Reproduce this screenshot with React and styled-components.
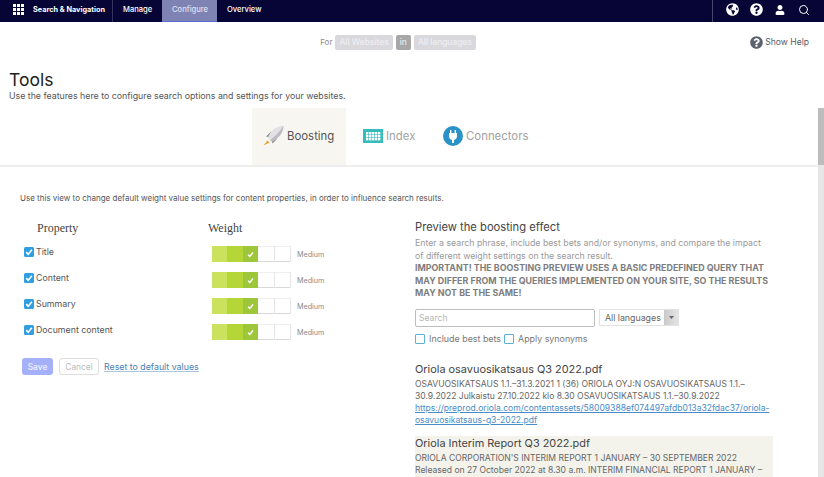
import React from 'react'
import styled, { createGlobalStyle } from 'styled-components'
import { FaGlobeAmericas, FaQuestionCircle, FaUser } from 'react-icons/fa'
import { FiSearch } from 'react-icons/fi'

const Global = createGlobalStyle`
  html, body { margin: 0; height: 100%; overflow: hidden; background: #fff; }
  body { font-family: Inter, "Liberation Sans", sans-serif; color: #444; }
  #root { height: 100%; }
`
const Page = styled.div`
  width: 824px;
  height: 477px;
  display: flex;
  flex-direction: column;
  overflow: hidden;
`
const TopBar = styled.header`
  height: 22px;
  flex: none;
  background: #070535;
  display: flex;
  align-items: stretch;
  color: #fff;
  font-size: 7.6px;
  font-weight: 500;
`
const AppMenu = styled.div`
  width: 24px;
  margin-left: 6px;
  padding-bottom: 3px;
  display: grid;
  place-items: center;
  svg { display: block; }
`
const ProductName = styled.div`
  width: 79px;
  padding: 0 0 3px 3px;
  display: flex;
  align-items: center;
  font-size: 7.3px;
  font-weight: 700;
  border-right: 1px solid #34335c;
`
const NavItem = styled.div`
  display: flex;
  align-items: center;
  padding: 0 10px 3px;
  width: ${p => p.$w}px;
  box-sizing: border-box;
  background: ${p => (p.$active ? '#7f83b4' : 'transparent')};
  border-bottom: 1px solid ${p => (p.$active ? '#5d6bd6' : 'transparent')};
  color: ${p => (p.$active ? '#dfe1f2' : '#fff')};
`
const Spacer = styled.div`
  flex: 1;
`
const TopIcons = styled.div`
  width: 112px;
  box-sizing: border-box;
  border-left: 1px solid #47476f;
  padding: 0 0 3px 7px;
  display: flex;
  align-items: center;
`
const TopIcon = styled.span`
  width: 24px;
  display: grid;
  place-items: center;
`
const Body = styled.div`
  flex: 1;
  display: flex;
  min-height: 0;
`
const Main = styled.main`
  flex: 1;
  min-width: 0;
  display: flex;
  flex-direction: column;
`
const Scrollbar = styled.div`
  width: 6px;
  flex: none;
  display: flex;
  flex-direction: column;
  padding-top: 86px;
`
const Thumb = styled.div`
  height: 57px;
  flex: none;
  background: #bdbdbd;
`
const Track = styled.div`
  flex: 1;
  background: #e6e6e6;
`
const ContextRow = styled.div`
  height: 40px;
  flex: none;
  display: grid;
  grid-template-columns: 1fr auto 1fr;
  align-items: center;
`
const ContextCenter = styled.div`
  grid-column: 2;
  display: flex;
  align-items: center;
  gap: 3px;
  margin-right: 22px;
  font-size: 8px;
  color: #8d8d8d;
`
const Chip = styled.span`
  background: ${p => (p.$dark ? '#a7a7a7' : '#d9d9dd')};
  color: ${p => (p.$dark ? '#e8e8e8' : '#eeeef2')};
  border-radius: 2px;
  padding: 0 4px;
  line-height: 15px;
  height: 15px;
  font-size: 8.4px;
  font-weight: 500;
`
const Help = styled.div`
  grid-column: 3;
  justify-self: end;
  display: flex;
  align-items: center;
  gap: 2px;
  margin-right: 9px;
  font-size: 8.6px;
  color: #555a66;
  svg { color: #5c626f; }
`
const Intro = styled.div`
  padding-left: 9px;
`
const PageTitle = styled.h1`
  margin: 9px 0 0;
  font-size: 17.5px;
  line-height: 18px;
  font-weight: 400;
  color: #222;
`
const IntroText = styled.p`
  margin: 1px 0 0;
  font-size: 8.8px;
  line-height: 11px;
  color: #555;
`
const Tabs = styled.nav`
  margin-top: 7px;
  height: 57px;
  flex: none;
  padding-left: 252px;
  display: flex;
  border-bottom: 2px solid #eee;
`
const Tab = styled.div`
  width: ${p => p.$w}px;
  padding-left: ${p => p.$pad}px;
  display: flex;
  align-items: center;
  gap: 3px;
  box-sizing: border-box;
  background: ${p => (p.$active ? '#f8f6f1' : 'transparent')};
  color: ${p => (p.$active ? '#555' : '#a2a2a2')};
  font-size: 11.4px;
  padding-bottom: 2px;
  svg { flex: none; }
`
const Content = styled.div`
  padding: 26px 0 0 20px;
  display: flex;
  flex-direction: column;
`
const Lead = styled.p`
  margin: 0;
  font-size: 8px;
  line-height: 11px;
  color: #555;
`
const Columns = styled.div`
  margin-top: 17px;
  display: flex;
`
const LeftCol = styled.section`
  width: 395px;
  flex: none;
`
const RightCol = styled.section`
  width: 358px;
  flex: none;
`
const PropertyHead = styled.div`
  display: flex;
  font-family: "Liberation Serif", serif;
  font-size: 12px;
  line-height: 14px;
  color: #444;
  padding-left: 17px;
  span:first-child { width: 171px; }
`
const Rows = styled.div`
  margin-top: 11px;
  display: flex;
  flex-direction: column;
  gap: 10px;
`
const Row = styled.div`
  height: 16px;
  display: flex;
  align-items: center;
`
const CheckBox = styled.span`
  width: 10px;
  height: 10px;
  margin: 0 2px 4px 4px;
  flex: none;
  border-radius: 1.5px;
  background: #2f9fe2;
  display: grid;
  place-items: center;
`
const RowLabel = styled.span`
  width: 176px;
  margin-bottom: 6px;
  font-size: 8.8px;
  color: #555;
`
const Meter = styled.div`
  width: 79px;
  height: 16px;
  display: flex;
  border-radius: 2px;
  box-shadow: inset 0 -1px 0 #d8d8d8, inset 0 1px 0 #eee;
`
const Step = styled.div`
  flex: 1;
  background: ${p => p.$c || 'transparent'};
  border-right: ${p => (p.$c ? 'none' : '1px solid #e6e6e6')};
  display: grid;
  place-items: center;
`
const WeightLabel = styled.span`
  margin-left: 6px;
  font-size: 7.2px;
  color: #8a8a8a;
`
const Actions = styled.div`
  margin-top: 18px;
  margin-left: 2px;
  display: flex;
  align-items: center;
`
const SaveButton = styled.button`
  border: none;
  background: #a5b0fb;
  color: #eef0ff;
  font: 500 8.4px Inter, sans-serif;
  width: 31px;
  height: 17px;
  padding: 0;
  border-radius: 3px;
`
const CancelButton = styled.button`
  border: 1px solid #ddd;
  background: #fff;
  color: #bcbcbc;
  font: 400 8.4px Inter, sans-serif;
  width: 40px;
  height: 17px;
  padding: 0;
  margin-left: 6px;
  border-radius: 3px;
`
const ResetLink = styled.a`
  margin-left: 5px;
  font-size: 8.8px;
  color: #4a7fb5;
  border-bottom: 1px solid #a9c6e0;
  line-height: 9px;
`
const PreviewTitle = styled.h2`
  margin: 0;
  font-size: 11.2px;
  line-height: 13px;
  font-weight: 400;
  color: #444;
`
const PreviewText = styled.p`
  margin: 3px 0 0;
  width: 355px;
  font-size: 8.75px;
  line-height: 12.5px;
  color: #9a9a9a;
  b { color: #7d7d7d; font-weight: 700; font-size: 8.9px; }
`
const SearchRow = styled.div`
  margin-top: 9px;
  display: flex;
  align-items: center;
  gap: 4px;
`
const SearchInput = styled.div`
  width: 180px;
  height: 18px;
  box-sizing: border-box;
  border: 1px solid #bdbdbd;
  border-radius: 2px;
  font-size: 8.6px;
  line-height: 16px;
  padding-left: 3px;
  color: #b5b5b5;
`
const LangSelect = styled.div`
  width: 80px;
  height: 17px;
  box-sizing: border-box;
  border: 1px solid #e2e2e2;
  display: flex;
  font-size: 8.8px;
  line-height: 15px;
  color: #666;
  padding-left: 5px;
  justify-content: space-between;
`
const SelectArrow = styled.span`
  width: 14px;
  background: linear-gradient(90deg, #c9c9c9, #e4e4e4);
  display: grid;
  place-items: center;
`
const OptionRow = styled.div`
  margin-top: 7px;
  display: flex;
  align-items: center;
  font-size: 8.9px;
  line-height: 10px;
  color: #777;
`
const EmptyBox = styled.span`
  width: 10px;
  height: 10px;
  box-sizing: border-box;
  flex: none;
  border: 1.5px solid #5bb0dc;
  border-radius: 1px;
  margin-right: 4px;
`
const OptionLabel = styled.span`
  margin-right: 3px;
`
const Hit = styled.article`
  width: 358px;
  box-sizing: border-box;
  overflow: hidden;
  background: ${p => (p.$shade ? '#f3f3ec' : 'transparent')};
  margin-top: ${p => p.$top}px;
`
const HitTitle = styled.h3`
  margin: 0;
  font-size: 10.9px;
  line-height: 15px;
  font-weight: 400;
  color: #444;
`
const HitText = styled.p`
  margin: 1px 0 0;
  font-size: 8.55px;
  line-height: 12px;
  color: #666;
`
const HitLink = styled.a`
  display: block;
  color: #4a8cc7;
  text-decoration: underline;
  white-space: nowrap;
`

const AppGrid = () => (
  <svg width="11" height="11" viewBox="0 0 11 11" fill="#fff">
    {[0, 4, 8].flatMap(y =>
      [0, 4, 8].map(x => <rect key={`${x}-${y}`} x={x} y={y} width="3" height="3" />)
    )}
  </svg>
)

const Rocket = () => (
  <svg width="21" height="21" viewBox="0 0 21 21">
    <path d="M4.5 15.5 L0.5 20.5 L6.5 17.5 Z" fill="#f0a030" />
    <path d="M3 11.5 L8 6.5 L7 12.5 Z M9.5 18.5 L14.5 13.5 L8.5 14.5 Z" fill="#8f8f92" />
    <path d="M5 13 C6.5 6.5 13 1 20.5 0.5 C20.5 8 15 14 8.5 16.5 Z" fill="#e2e2e5" />
    <path d="M7 15 C12 12 17 6 20.5 0.5 C20.5 8 15 14 8.5 16.5 Z" fill="#bcbcc0" />
  </svg>
)

const IndexIcon = () => (
  <svg width="20" height="14" viewBox="0 0 20 14">
    <rect width="20" height="14" fill="#36bcbc" />
    {[3, 6, 9].flatMap(y =>
      [3, 6, 9, 12, 15].map(x => <rect key={`${x}-${y}`} x={x} y={y} width="2.4" height="2.4" fill="#fff" />)
    )}
  </svg>
)

const PlugIcon = () => (
  <svg width="20" height="20" viewBox="0 0 20 20">
    <circle cx="10" cy="10" r="10" fill="#2b92c8" />
    <path d="M7 4h1.4v3h3.2V4H13v3h1v3.2c0 2-1.3 3.3-3 3.5V17H9v-3.3c-1.7-.2-3-1.5-3-3.5V7h1z" fill="#fff" />
  </svg>
)

const Tick = ({ size = 7 }) => (
  <svg width={size} height={size} viewBox="0 0 10 10" fill="none" stroke="#fff" strokeWidth="2">
    <path d="M1.5 5.2 L4 7.8 L8.6 2.2" />
  </svg>
)

const properties = ['Title', 'Content', 'Summary', 'Document content']

export default function App() {
  return (
    <Page>
      <Global />
      <TopBar>
        <AppMenu><AppGrid /></AppMenu>
        <ProductName>Search &amp; Navigation</ProductName>
        <NavItem $w={49}>Manage</NavItem>
        <NavItem $w={55} $active>Configure</NavItem>
        <NavItem $w={50}>Overview</NavItem>
        <Spacer />
        <TopIcons>
          <TopIcon><FaGlobeAmericas size={13} /></TopIcon>
          <TopIcon><FaQuestionCircle size={13} /></TopIcon>
          <TopIcon><FaUser size={10} /></TopIcon>
          <TopIcon><FiSearch size={12} /></TopIcon>
        </TopIcons>
      </TopBar>
      <Body>
        <Main>
          <ContextRow>
            <ContextCenter>
              For <Chip>All Websites</Chip> <Chip $dark>in</Chip> <Chip>All languages</Chip>
            </ContextCenter>
            <Help><FaQuestionCircle size={13} />Show Help</Help>
          </ContextRow>
          <Intro>
            <PageTitle>Tools</PageTitle>
            <IntroText>Use the features here to configure search options and settings for your websites.</IntroText>
          </Intro>
          <Tabs>
            <Tab $w={94} $pad={11} $active><Rocket />Boosting</Tab>
            <Tab $w={84} $pad={17}><IndexIcon />Index</Tab>
            <Tab $w={110} $pad={13}><PlugIcon />Connectors</Tab>
          </Tabs>
          <Content>
            <Lead>Use this view to change default weight value settings for content properties, in order to influence search results.</Lead>
            <Columns>
              <LeftCol>
                <PropertyHead><span>Property</span><span>Weight</span></PropertyHead>
                <Rows>
                  {properties.map(name => (
                    <Row key={name}>
                      <CheckBox><Tick size={8} /></CheckBox>
                      <RowLabel>{name}</RowLabel>
                      <Meter>
                        <Step $c="#cbe25e" />
                        <Step $c="#b5d637" />
                        <Step $c="#9dc63a"><Tick /></Step>
                        <Step />
                        <Step />
                      </Meter>
                      <WeightLabel>Medium</WeightLabel>
                    </Row>
                  ))}
                </Rows>
                <Actions>
                  <SaveButton>Save</SaveButton>
                  <CancelButton>Cancel</CancelButton>
                  <ResetLink>Reset to default values</ResetLink>
                </Actions>
              </LeftCol>
              <RightCol>
                <PreviewTitle>Preview the boosting effect</PreviewTitle>
                <PreviewText>
                  Enter a search phrase, include best bets and/or synonyms, and compare the impact of different weight settings on the search result.<br />
                  <b>IMPORTANT! THE BOOSTING PREVIEW USES A BASIC PREDEFINED QUERY THAT MAY DIFFER FROM THE QUERIES IMPLEMENTED ON YOUR SITE, SO THE RESULTS MAY NOT BE THE SAME!</b>
                </PreviewText>
                <SearchRow>
                  <SearchInput>Search</SearchInput>
                  <LangSelect>
                    All languages
                    <SelectArrow>
                      <svg width="5" height="3" viewBox="0 0 5 3"><path d="M0 0h5L2.5 3z" fill="#666" /></svg>
                    </SelectArrow>
                  </LangSelect>
                </SearchRow>
                <OptionRow>
                  <EmptyBox /><OptionLabel>Include best bets</OptionLabel>
                  <EmptyBox /><OptionLabel>Apply synonyms</OptionLabel>
                </OptionRow>
                <Hit $top={18}>
                  <HitTitle>Oriola osavuosikatsaus Q3 2022.pdf</HitTitle>
                  <HitText>
                    OSAVUOSIKATSAUS 1.1.–31.3.2021 1 (36) ORIOLA OYJ:N OSAVUOSIKATSAUS 1.1.–30.9.2022 Julkaistu 27.10.2022 klo 8.30 OSAVUOSIKATSAUS 1.1.–30.9.2022
                    <HitLink>https://preprod.oriola.com/contentassets/58009388ef074497afdb013a32fdac37/oriola-</HitLink>
                    <HitLink>osavuosikatsaus-q3-2022.pdf</HitLink>
                  </HitText>
                </Hit>
                <Hit $top={10} $shade>
                  <HitTitle>Oriola Interim Report Q3 2022.pdf</HitTitle>
                  <HitText>
                    ORIOLA CORPORATION'S INTERIM REPORT 1 JANUARY – 30 SEPTEMBER 2022 Released on 27 October 2022 at 8.30 a.m. INTERIM FINANCIAL REPORT 1 JANUARY – 30
                  </HitText>
                </Hit>
              </RightCol>
            </Columns>
          </Content>
        </Main>
        <Scrollbar><Thumb /><Track /></Scrollbar>
      </Body>
    </Page>
  )
}
